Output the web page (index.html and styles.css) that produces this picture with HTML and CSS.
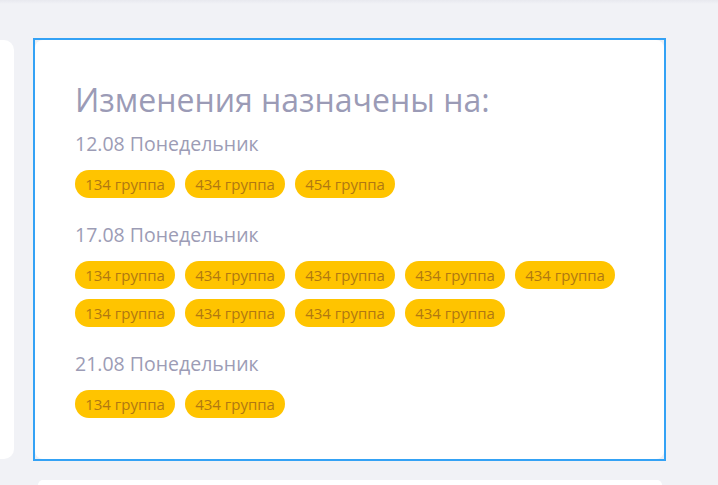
FILE: index.html
```html
<!DOCTYPE html>
<html lang="ru">
<head>
<meta charset="utf-8">
<link rel="stylesheet" href="styles.css">
</head>
<body>
<div class="topbar"></div>
<div class="layout">
  <div class="side-card"></div>
  <div class="selected">
    <section class="main-card">
      <h1 class="title">Изменения назначены на:</h1>
      <div class="day">
        <div class="day-name">12.08 Понедельник</div>
        <div class="pills">
          <span class="pill">134 группа</span>
          <span class="pill">434 группа</span>
          <span class="pill">454 группа</span>
        </div>
      </div>
      <div class="day">
        <div class="day-name">17.08 Понедельник</div>
        <div class="pills">
          <span class="pill">134 группа</span>
          <span class="pill">434 группа</span>
          <span class="pill">434 группа</span>
          <span class="pill">434 группа</span>
          <span class="pill">434 группа</span>
          <span class="pill">134 группа</span>
          <span class="pill">434 группа</span>
          <span class="pill">434 группа</span>
          <span class="pill">434 группа</span>
        </div>
      </div>
      <div class="day">
        <div class="day-name">21.08 Понедельник</div>
        <div class="pills">
          <span class="pill">134 группа</span>
          <span class="pill">434 группа</span>
        </div>
      </div>
    </section>
  </div>
  <div class="spacer"></div>
  <div class="bottom-card"></div>
</div>
</body>
</html>
```
FILE: styles.css
```css
html, body {
  margin: 0;
  padding: 0;
  background: #f1f2f6;
  font-family: "Open Sans", "Noto Sans", sans-serif;
  overflow: hidden;
  height: 485px;
}
.topbar {
  height: 4px;
  background: linear-gradient(#e8e9ef, #f1f2f6);
}
.layout {
  display: grid;
  grid-template-columns: 14px 633px;
  grid-template-rows: 423px 5px;
  column-gap: 19px;
  row-gap: 19px;
  padding-top: 34px;
}
.side-card {
  background: #fff;
  border-radius: 0 10px 10px 0;
  margin: 2px 0;
}
.bottom-card {
  background: #fff;
  border-radius: 12px 12px 0 0;
  margin-left: 5px;
  margin-right: 4px;
}
.selected {
  border: 2px solid #34a2f5;
  background: #eef0f4;
}
.main-card {
  height: 100%;
  background: #fff;
  border-radius: 8px;
  padding: 40px 40px 0 40px;
  box-sizing: border-box;
}
.title {
  margin: 0;
  font-weight: 400;
  font-size: 32px;
  line-height: 40px;
  color: #9b9bb6;
}
.day-name {
  font-size: 19.5px;
  line-height: 26px;
  color: #9c9cb5;
  margin-top: 11px;
}
.day + .day .day-name { margin-top: 24px; }
.pills {
  display: flex;
  flex-wrap: wrap;
  gap: 10px;
  margin-top: 13px;
  max-width: 560px;
}
.pill {
  display: inline-flex;
  align-items: center;
  justify-content: center;
  width: 100px;
  height: 28px;
  border-radius: 14px;
  background: #ffc400;
  color: #b07812;
  font-size: 15px;
}
```
